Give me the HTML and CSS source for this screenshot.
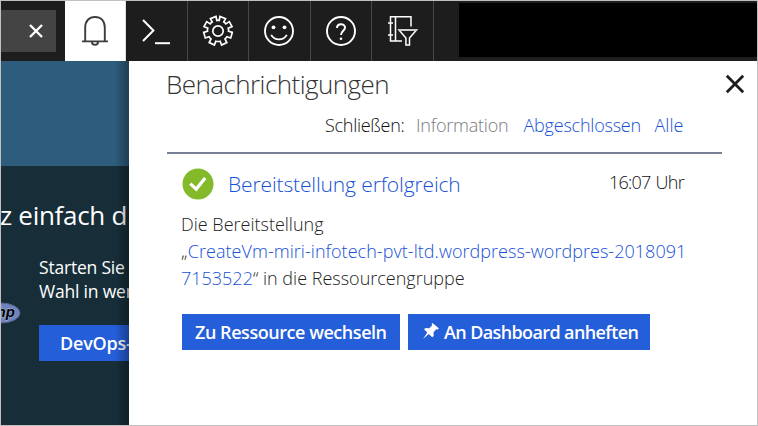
FILE: index.html
```html
<!DOCTYPE html>
<html lang="de">
<head>
<meta charset="utf-8">
<title>Benachrichtigungen</title>
<link rel="stylesheet" href="styles.css">
</head>
<body>
<div class="window">
  <header class="topbar">
    <div class="search"><svg width="14" height="14" viewBox="0 0 14 14"><path d="M1 1l12 12M13 1L1 13" fill="none" stroke="#fff" stroke-width="2.4"/></svg></div>
    <div class="tool tool-active"><svg width="28" height="32" viewBox="0 0 28 32"><g fill="none" stroke="#3c3d40" stroke-width="1.9"><path d="M4.2 26V12.6C4.2 5.8 8.2 2 14 2s9.8 3.8 9.8 10.6V26"/><path d="M1 26.4h26M10.9 26.8a3.1 3.1 0 0 0 6.2 0"/></g></svg></div>
    <div class="tool"><svg width="30" height="30" viewBox="0 0 30 30"><g fill="none" stroke="#fff" stroke-width="2"><path d="M2 4l10.4 10.5L2 25"/><path d="M14 27.2h15"/></g></svg></div>
    <div class="tool"><svg width="32" height="32" viewBox="-16 -16 32 32"><g fill="none" stroke="#fff" stroke-width="1.7"><circle r="5.2"/><path d="M-7.500 -12.400L-2 -14.500L-1.200 -10.500Q0 -10.800 1.200 -10.500L2 -14.500L7.500 -12.400L5.800 -9Q7.200 -8.200 7.800 -7.100L11.300 -9.400L14 -4.400L10.200 -2.800Q10.800 -1.300 10.500 .2L14.300 1.400L12.700 7L8.900 5.800Q8 7.200 7 8L8.800 11.500L3.600 14L2.200 10.200Q0 10.800 -2.200 10.200L-3.600 14L-8.800 11.500L-7 8Q-8 7.200 -8.900 5.800L-12.700 7L-14.300 1.400L-10.500 .2Q-10.800 -1.300 -10.200 -2.800L-14 -4.400L-11.300 -9.400L-7.800 -7.100Q-7.200 -8.200 -5.800 -9Z"/></g></svg></div>
    <div class="tool"><svg width="32" height="32" viewBox="0 0 32 32"><circle cx="16" cy="16" r="14" fill="none" stroke="#fff" stroke-width="1.9"/><circle cx="10.500" cy="12.300" r="1.900" fill="#fff"/><circle cx="21.500" cy="12.300" r="1.900" fill="#fff"/><path d="M8.200 19.800c3.200 6 12.400 6 15.600 0" fill="none" stroke="#fff" stroke-width="1.800"/></svg></div>
    <div class="tool"><svg width="32" height="32" viewBox="0 0 32 32"><circle cx="16" cy="16" r="14" fill="none" stroke="#fff" stroke-width="1.900"/><path d="M12 13c0-5 8-5.100 8-.5 0 3.200-4 3.400-4 7.600" fill="none" stroke="#fff" stroke-width="2"/><circle cx="16" cy="23.700" r="1.300" fill="#fff"/></svg></div>
    <div class="tool"><svg width="32" height="32" viewBox="0 0 32 32"><g fill="none" stroke="#fff" stroke-width="1.500"><path d="M24 11.500V1.800H3.500V26H15M8.500 2v24M1 8h5M1 20h5"/><path d="M12 15h17.500l-7 8v7h-3.600v-7z"/></g><path d="M12 15h17.500" stroke="#ccc" stroke-width="2"/></svg></div>
    <div class="account"></div>
  </header>
  <main class="content">
    <section class="backdrop">
      <div class="banner"></div>
      <div class="promo">
        <h2>z einfach d</h2>
        <div class="promo-text">Starten Sie<br>Wahl in wer</div>
        <div class="devops">DevOps-</div>
        <svg class="php" width="20" height="24" viewBox="0 0 20 24"><ellipse cx="0" cy="12" rx="19" ry="10" fill="#6f84bd" stroke="#536594"/><text x="-4.500" y="15.500" class="php-text">hp</text></svg>
      </div>
    </section>
    <section class="panel">
      <div class="panel-head"><h1>Benachrichtigungen</h1><svg class="close" width="20" height="20" viewBox="0 0 20 20"><path d="M1.800 1.800l16.400 16.400M18.200 1.800L1.800 18.200" fill="none" stroke="#1c1c1c" stroke-width="2.800"/></svg></div>
      <div class="dismiss"><span class="t1">Schließen:</span><span class="t2">Information</span><a class="t3">Abgeschlossen</a><a class="t4">Alle</a></div>
      <article class="notice">
        <div class="notice-head">
          <svg width="32" height="32" viewBox="0 0 32 32"><circle cx="16" cy="16" r="15.500" fill="#84b92a"/><path d="M8.300 15.600l5.900 5.500 9-11.200" fill="none" stroke="#fff" stroke-width="3.200"/></svg>
          <h3>Bereitstellung erfolgreich</h3>
          <time>16:07 Uhr</time>
        </div>
        <p>Die Bereitstellung<br><span class="resource">„<a>CreateVm-miri-infotech-pvt-ltd.wordpress-wordpres-2018091</a></span><br><a>7153522</a>“ in die Ressourcengruppe</p>
        <div class="actions">
          <div class="btn b1">Zu Ressource wechseln</div>
          <div class="btn b2"><svg width="18" height="18" viewBox="0 0 18 18"><path d="M10.500 1L17 6.500l-1.400 1-1.400-.3-2.700 3.300.2 3.400-1.500 1.300-3.400-3.100L1 17l4.300-6.600L2 7.200l1.600-1.300 3.600.3 3-2.900-.6-1.400z" fill="#fff"/></svg><span>An Dashboard anheften</span></div>
        </div>
      </article>
    </section>
  </main>
</div>
</body>
</html>
```
FILE: styles.css
```css
* { box-sizing: border-box; }
body { margin: 0; font-family: "Open Sans", "Noto Sans", sans-serif; font-size: 18px; }
h1, h2, h3, p { margin: 0; font-weight: inherit; white-space: nowrap; }
svg { display: block; flex: none; }
.window { width: 758px; height: 426px; border: 1px solid #c0c0c0; overflow: hidden; background: #fff; display: flex; flex-direction: column; }
.topbar { height: 60px; flex: none; background: #1d1d1d; display: flex; align-items: stretch; }
.search { width: 55px; height: 42px; margin: 9px 9px 0 0; background: #444; display: flex; align-items: center; justify-content: flex-end; padding-right: 13px; }
.tool { width: 61.6px; flex: none; border-right: 1px solid #484848; display: flex; align-items: center; justify-content: center; }
.tool-active { width: 61px; background: #fff; border-color: #ddd; }
.account { flex: 1; height: 54px; margin: 2px 0 0 25px; background: #000; }
.content { flex: 1; display: flex; min-height: 0; }
.backdrop { width: 128px; flex: none; overflow: hidden; position: relative; background: #172e39; color: #fff; }
.backdrop::after { content: ""; position: absolute; top: 0; right: 0; bottom: 0; width: 14px; background: linear-gradient(to right, rgba(0,0,0,0), rgba(0,0,0,.32)); }
.banner { height: 105px; background: #2d5c7c; }
.promo { position: relative; }
.promo h2 { font-size: 26px; line-height: 36px; padding-top: 31px; margin-left: -1px; font-weight: 400; letter-spacing: -.3px; }
.promo-text { margin: 22px 0 0 38px; line-height: 24px; font-size: 17.500px; white-space: nowrap; letter-spacing: -.2px; }
.devops { margin: 22px 0 0 38px; height: 36px; line-height: 36px; padding-left: 21px; background: #245ed8; font-weight: 600; white-space: nowrap; letter-spacing: -.2px; }
.php { position: absolute; left: 0; top: 135px; }
.php-text { font: italic bold 15px "Liberation Sans", sans-serif; fill: #000; stroke: #aab6d8; stroke-width: 1px; paint-order: stroke; }
.panel { flex: 1; min-width: 0; color: #111; font-weight: 300; padding: 0 35px 0 38px; }
.panel-head { display: flex; justify-content: space-between; height: 47px; margin-right: -23px; }
h1 { font-size: 26px; line-height: 46px; color: #333; letter-spacing: -.56px; margin-left: -1px; }
.close { margin-top: 13px; }
.dismiss { height: 46px; border-bottom: 2px solid #778094; display: flex; padding-left: 158px; line-height: 35px; white-space: nowrap; letter-spacing: -.28px; }
.dismiss .t1 { width: 91px; }
.dismiss .t2 { width: 107.500px; color: #787b80; letter-spacing: -.22px; }
.dismiss .t3 { width: 131px; letter-spacing: -.22px; }
.dismiss .t4 { letter-spacing: 0; }
a { color: #1751d6; }
.notice { padding: 14px 0 0 15px; }
.notice-head { display: flex; height: 32px; }
.notice-head svg { margin: 0 0 0 -.5px; }
h3 { font-size: 21px; line-height: 32px; color: #1751d6; margin-left: 14.500px; width: 381px; letter-spacing: -.13px; }
time { line-height: 29px; white-space: nowrap; letter-spacing: -.75px; word-spacing: 1px; }
.notice p { margin: 11px 0 0 -1px; line-height: 27px; color: #222; }
.resource { letter-spacing: .04px; }
.actions { display: flex; gap: 8px; margin-top: 22px; }
.btn { height: 36px; line-height: 36px; color: #fff; font-weight: 600; background: #245ed8; white-space: nowrap; display: flex; letter-spacing: -.45px; }
.b1 { width: 218px; padding-left: 13px; }
.b2 { width: 242px; padding-left: 14px; gap: 4px; letter-spacing: -.62px; }
.b2 svg { margin-top: 8px; }
```
